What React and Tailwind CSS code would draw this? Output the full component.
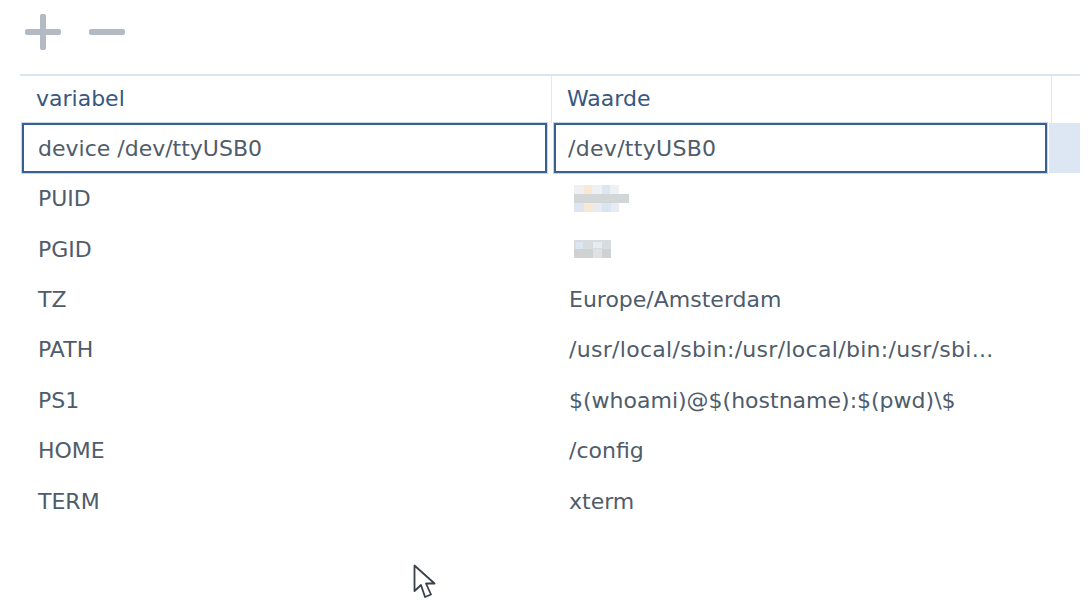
const rows = [
  ['PUID', null],
  ['PGID', null],
  ['TZ', 'Europe/Amsterdam'],
  ['PATH', '/usr/local/sbin:/usr/local/bin:/usr/sbi...'],
  ['PS1', '$(whoami)@$(hostname):$(pwd)\\$'],
  ['HOME', '/config'],
  ['TERM', 'xterm'],
]

function PuidBlur() {
  return (
    <svg width="55" height="27" className="block ml-[5px]">
      <rect x="0" y="0" width="45" height="9" fill="#eef0f4" />
      <rect x="10" y="0" width="8" height="9" fill="#f9e8d4" />
      <rect x="28" y="0" width="8" height="9" fill="#dbe6f1" />
      <rect x="0" y="9" width="55" height="9" fill="#d3d6d7" />
      <rect x="0" y="18" width="45" height="9" fill="#e8ecf2" />
      <rect x="0" y="18" width="10" height="9" fill="#dbe6f2" />
      <rect x="10" y="18" width="9" height="9" fill="#f8e8d6" />
      <rect x="28" y="18" width="9" height="9" fill="#d9e5f1" />
    </svg>
  )
}

function PgidBlur() {
  return (
    <svg width="37" height="18" className="block ml-[5px]">
      <rect x="0" y="0" width="37" height="9" fill="#d9dcdf" />
      <rect x="2" y="2" width="7" height="7" fill="#dbe6f2" />
      <rect x="19" y="2" width="9" height="6" fill="#e4edf6" />
      <rect x="0" y="9" width="37" height="9" fill="#cfd1d3" />
      <rect x="19" y="9" width="9" height="9" fill="#dfe1e2" />
    </svg>
  )
}

export default function App() {
  return (
    <div className="w-[1090px] h-[606px] bg-white overflow-hidden relative font-['DejaVu_Sans',sans-serif] text-[22px] text-[#4f5c6b]">
      <div className="h-[74px] flex items-start gap-[27px] pl-[25px] pt-[14px]">
        <svg width="37" height="37" viewBox="0 0 37 37">
          <rect x="15" y="0" width="6" height="36" rx="2" fill="#b3bac3" />
          <rect x="0" y="15" width="36" height="6" rx="2" fill="#b3bac3" />
        </svg>
        <svg width="37" height="37" viewBox="0 0 37 37">
          <rect x="0" y="15" width="36" height="6" rx="2" fill="#b3bac3" />
        </svg>
      </div>

      <div className="ml-[20px] w-[1060px] border-t-2 border-[#dbe5f0]">
        <div className="flex h-[47px] text-[#38587f]">
          <div className="w-[532px] border-r border-[#e3e8f0] pl-[16px] pb-[3px] flex items-center">variabel</div>
          <div className="w-[500px] border-r border-[#e3e8f0] pl-[15px] pb-[3px] flex items-center">Waarde</div>
        </div>

        <div className="flex h-[50px] bg-[#dce7f3]">
          <div className="w-[531px] bg-white pl-[2px] pr-[4px]">
            <div className="h-full border-[2.5px] border-[#36608f] shadow-[0_0_0_1px_#c9d6e5] pl-[14px] flex items-center">device /dev/ttyUSB0</div>
          </div>
          <div className="w-[498px] bg-white pl-[3px] pr-[2px]">
            <div className="h-full border-[2.5px] border-[#36608f] shadow-[0_0_0_1px_#c9d6e5] pl-[12px] flex items-center tracking-[0.3px]">/dev/ttyUSB0</div>
          </div>
        </div>

        {rows.map(([name, value]) => (
          <div key={name} className="flex h-[50.4px] items-center pt-[1px]">
            <div className="w-[531px] pl-[18px]">{name}</div>
            <div className={name === 'PATH' ? 'w-[500px] pl-[18px] whitespace-nowrap tracking-[0.3px]' : 'w-[500px] pl-[18px] whitespace-nowrap'}>
              {value}
              {name === 'PUID' && <PuidBlur />}
              {name === 'PGID' && <PgidBlur />}
            </div>
          </div>
        ))}
      </div>

      <svg className="absolute left-[413px] top-[564px]" width="24" height="36" viewBox="0 0 24 36">
        <path d="M1.5 1.5 L1.5 27 L8 21 L12 33 L18 30.5 L13 19.5 L21.5 19.5 Z" fill="#fff" stroke="#3a4048" strokeWidth="1.8" strokeLinejoin="round" />
      </svg>
    </div>
  )
}
